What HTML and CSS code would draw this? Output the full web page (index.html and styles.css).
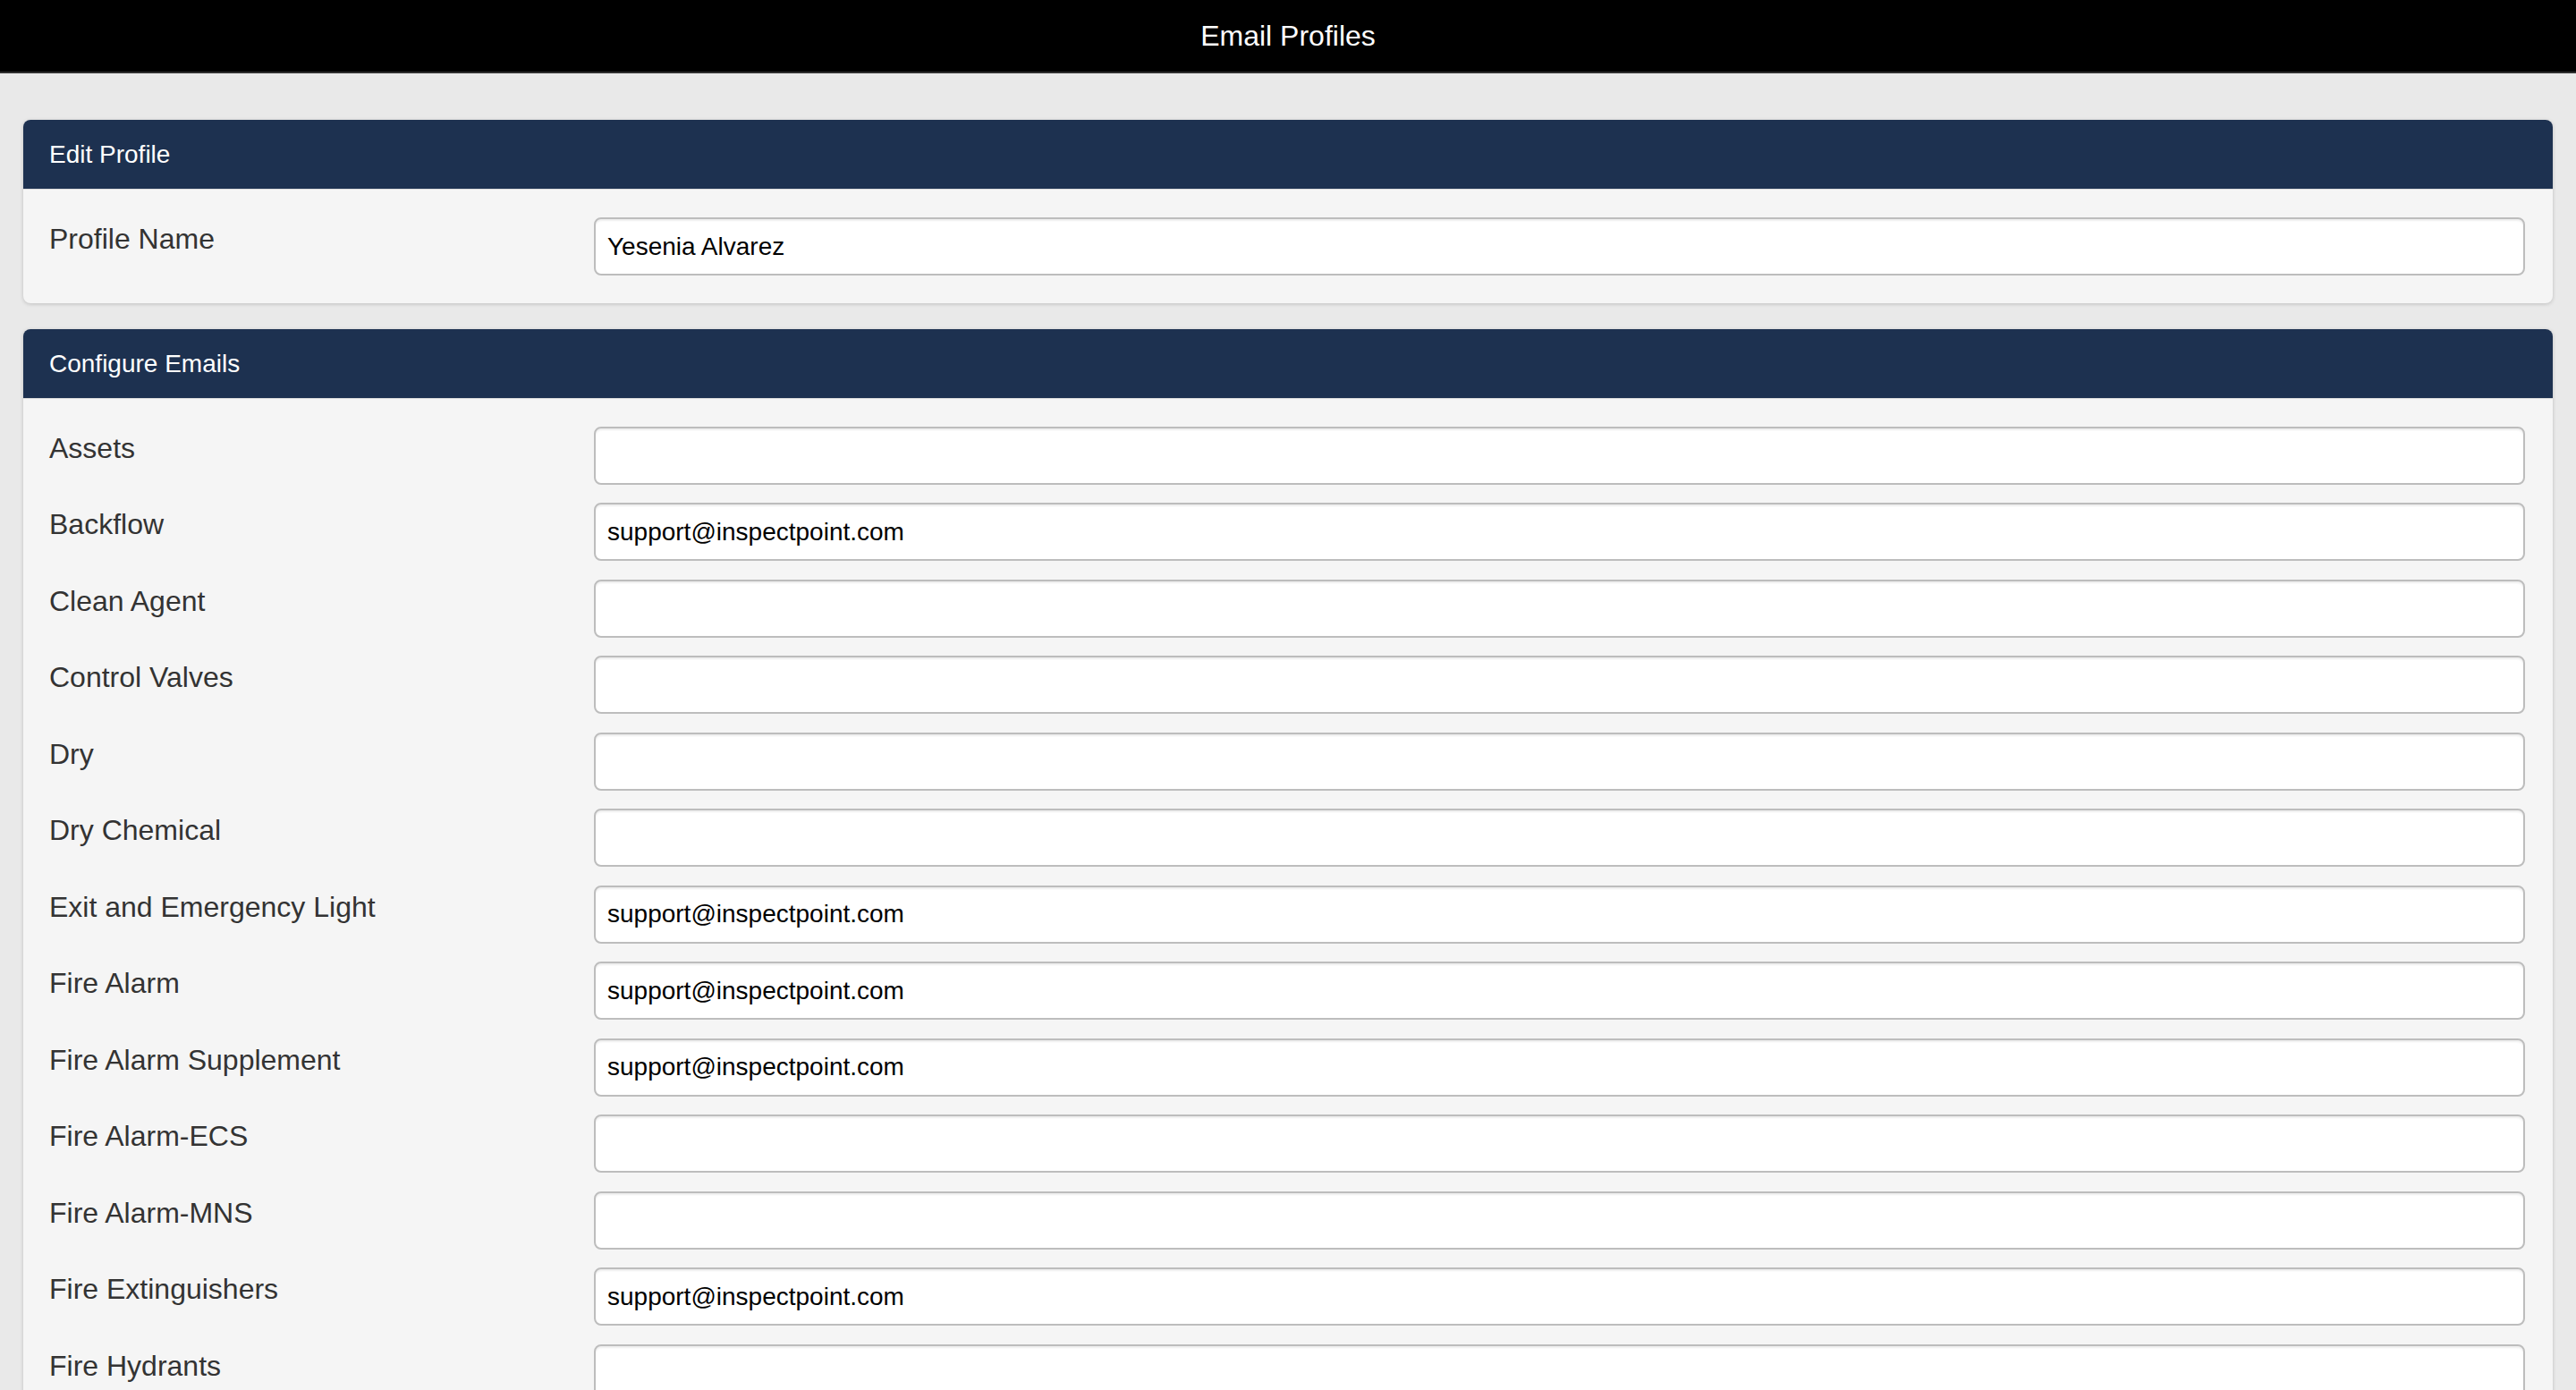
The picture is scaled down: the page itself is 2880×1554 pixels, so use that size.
FILE: index.html
```html
<!DOCTYPE html>
<html>
<head>
    <title>Email Profiles</title>
    <link rel="stylesheet" href="styles.css">
</head>
<body>
    <div class="top-bar">Email Profiles</div>

    <div class="container">
        <!-- Profile name -->
        <div class="panel">
            <div class="panel-heading">Edit Profile</div>
            <div class="panel-body">
                <div class="form-row">
                    <label for="profileName">Profile Name</label>
                    <input type="text" id="profileName" value="Yesenia Alvarez">
                </div>
            </div>
        </div>

        <!-- Email per inspection type -->
        <div class="panel">
            <div class="panel-heading">Configure Emails</div>
            <div class="panel-body" id="emailRows">
                <div class="form-row">
                    <label for="assets">Assets</label>
                    <input type="text" id="assets" value="">
                </div>
                <div class="form-row">
                    <label for="backflow">Backflow</label>
                    <input type="text" id="backflow" value="support@inspectpoint.com">
                </div>
                <div class="form-row">
                    <label for="cleanAgent">Clean Agent</label>
                    <input type="text" id="cleanAgent" value="">
                </div>
                <div class="form-row">
                    <label for="controlValves">Control Valves</label>
                    <input type="text" id="controlValves" value="">
                </div>
                <div class="form-row">
                    <label for="dry">Dry</label>
                    <input type="text" id="dry" value="">
                </div>
                <div class="form-row">
                    <label for="dryChemical">Dry Chemical</label>
                    <input type="text" id="dryChemical" value="">
                </div>
                <div class="form-row">
                    <label for="exitLight">Exit and Emergency Light</label>
                    <input type="text" id="exitLight" value="support@inspectpoint.com">
                </div>
                <div class="form-row">
                    <label for="fireAlarm">Fire Alarm</label>
                    <input type="text" id="fireAlarm" value="support@inspectpoint.com">
                </div>
                <div class="form-row">
                    <label for="fireAlarmSupplement">Fire Alarm Supplement</label>
                    <input type="text" id="fireAlarmSupplement" value="support@inspectpoint.com">
                </div>
                <div class="form-row">
                    <label for="fireAlarmEcs">Fire Alarm-ECS</label>
                    <input type="text" id="fireAlarmEcs" value="">
                </div>
                <div class="form-row">
                    <label for="fireAlarmMns">Fire Alarm-MNS</label>
                    <input type="text" id="fireAlarmMns" value="">
                </div>
                <div class="form-row">
                    <label for="fireExtinguishers">Fire Extinguishers</label>
                    <input type="text" id="fireExtinguishers" value="support@inspectpoint.com">
                </div>
                <div class="form-row">
                    <label for="fireHydrants">Fire Hydrants</label>
                    <input type="text" id="fireHydrants" value="">
                </div>
                <div class="form-row">
                    <label for="firePump">Fire Pump</label>
                    <input type="text" id="firePump" value="">
                </div>
            </div>
        </div>
    </div>
</body>
</html>
```

FILE: styles.css
```css
body {
    margin: 0;
    background: #e9e9e9;
    font-family: "Liberation Sans", Arial, sans-serif;
    color: #333;
}
::-webkit-scrollbar {
    display: none;
}
.top-bar {
    height: 80px;
    line-height: 80px;
    background: #000;
    border-bottom: 2px solid #2e2e2e;
    color: #fff;
    text-align: center;
    font-size: 32px;
}
.container {
    padding: 52px 26px 0;
}
.panel {
    background: #f5f5f5;
    border-radius: 8px;
    box-shadow: 0 1px 4px rgba(0,0,0,0.18);
    margin-bottom: 29px;
}
.panel-heading {
    height: 77px;
    line-height: 77px;
    padding-left: 29px;
    background: #1d3150;
    border-radius: 8px 8px 0 0;
    border-bottom: 1px solid #dcdcdc;
    color: #fff;
    font-size: 28px;
}
.panel-body {
    padding: 31px 31px 10px 29px;
}
.form-row {
    display: grid;
    grid-template-columns: 609px 1fr;
    margin-bottom: 20.5px;
}
.form-row label {
    font-size: 32px;
    line-height: 36px;
    padding-top: 6px;
}
.form-row input {
    box-sizing: border-box;
    height: 65px;
    padding: 0 13px;
    border: 2px solid #bdbdbd;
    border-radius: 8px;
    background: #fff;
    box-shadow: inset 0 2px 2px rgba(0,0,0,0.07);
    font-family: "Liberation Sans", Arial, sans-serif;
    font-size: 28px;
    color: #000;
}
```
